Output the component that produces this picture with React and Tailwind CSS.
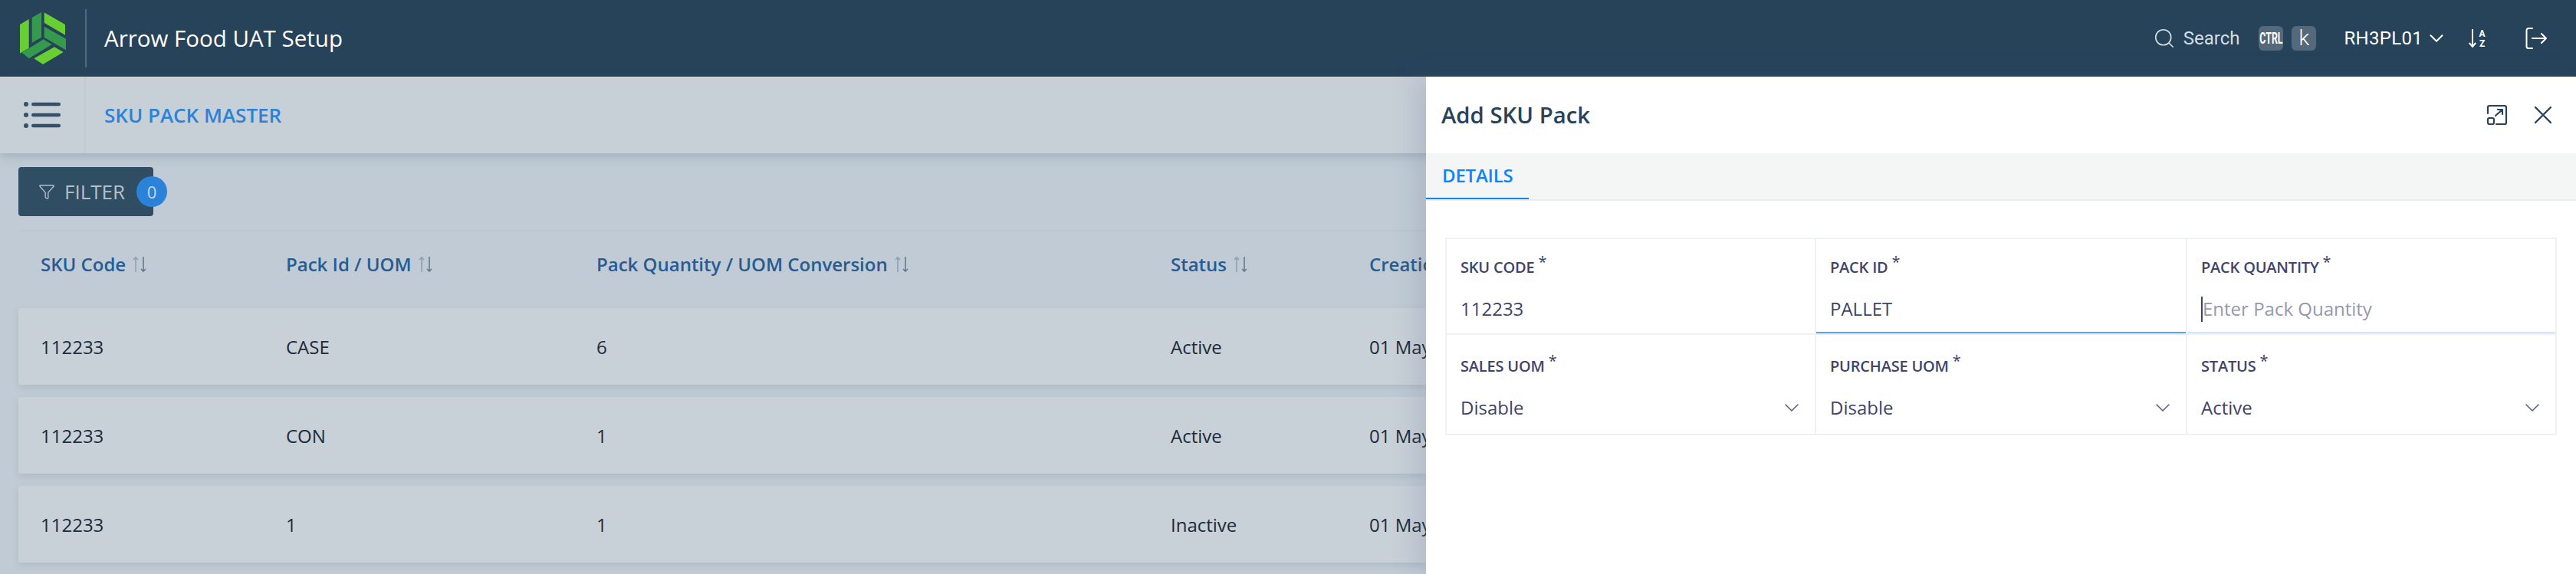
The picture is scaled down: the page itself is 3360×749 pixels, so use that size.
import React from 'react'
import { ChevronDown, Search, Filter } from 'lucide-react'

const font = { fontFamily: '"Open Sans", sans-serif' }
const roboto = { fontFamily: 'Roboto, sans-serif' }

const columns = [
  { label: 'SKU Code', cls: 'w-[320px]', sort: true },
  { label: 'Pack Id / UOM', cls: 'w-[405px]', sort: true },
  { label: 'Pack Quantity / UOM Conversion', cls: 'w-[749px]', sort: true },
  { label: 'Status', cls: 'w-[259px]', sort: true },
  { label: 'Creation Date', cls: 'w-[300px]', sort: false },
]

const rows = [
  ['112233', 'CASE', '6', 'Active', '01 May 2023'],
  ['112233', 'CON', '1', 'Active', '01 May 2023'],
  ['112233', '1', '1', 'Inactive', '01 May 2023'],
]

function Logo() {
  return (
    <svg viewBox="0 0 240 252" className="w-[80px] h-[84px]">
      <polygon points="30,72 65,51 65,164 30,185" fill="#68cf33" />
      <polygon points="77,45 114,24 114,122 77,143" fill="#359a4b" />
      <polygon points="125,25 207,72 207,113 125,65" fill="#68cf33" />
      <polygon points="125,80 210,128 210,172 125,122" fill="#359a4b" />
      <polygon points="122,130 155,150 65,205 38,182" fill="#359a4b" />
      <polygon points="165,160 200,180 120,228 85,205" fill="#68cf33" />
    </svg>
  )
}

function SortArrows() {
  return (
    <svg viewBox="0 0 20 22" className="w-[20px] h-[22px] ml-[8px]" fill="none" strokeWidth="1.600">
      <path d="M5 21V2M2 5l3-3 3 3" stroke="#8f9fb3" />
      <path d="M15 1v19M12 17l3 3 3-3" stroke="#66798f" />
    </svg>
  )
}

function Field({ label, value, placeholder, select, active, focus, low }) {
  return (
    <div className={`relative h-full px-[18px] ${low ? 'pt-[4px]' : ''}`}>
      <div className="flex items-start h-[74px] pt-[27px] text-[20px] leading-[20px] font-semibold text-[#3f4468] tracking-[-0.2px]">
        <span>{label}</span>
        <span className="ml-[5px] -mt-[7px] text-[20px] font-normal">*</span>
      </div>
      <div className="flex items-center justify-between h-[34px] text-[24px] leading-[34px] text-[#3f4468]">
        {placeholder ? (
          <span className="flex items-center text-[#9699ae]">
            <span className="w-[2px] h-[33px] bg-[#3f4468]" />
            {placeholder}
          </span>
        ) : (
          <span>{value}</span>
        )}
        {select && <ChevronDown size={32} strokeWidth={1.2} className="text-[#5a6080] -mr-[4px]" />}
      </div>
      {active && <div className="absolute left-0 right-0 bottom-0 h-[2px] bg-[#5ba0f8]" />}
      {focus && <div className="absolute left-0 right-0 bottom-0 h-[2px] bg-[#d4e6fd]" />}
    </div>
  )
}

export default function App() {
  return (
    <div style={font} className="relative w-[3360px] h-[749px] overflow-hidden bg-[#c0cbd5]">
      <header className="flex items-center h-[100px] bg-[#26435a] text-white">
        <div className="flex items-center justify-center w-[111px]">
          <Logo />
        </div>
        <div className="w-[2px] h-[76px] bg-[#4d6a85]" />
        <div className="ml-[23px] text-[29.5px] leading-[40px]">Arrow Food UAT Setup</div>
        <div style={roboto} className="flex items-center ml-auto pr-[38px]">
          <Search size={30} strokeWidth={1.3} className="text-[#d5dde3]" />
          <span className="ml-[10px] text-[24px] text-[#d5dde3]">Search</span>
          <span className="flex items-center justify-center ml-[25px] w-[32px] h-[32px] rounded-[6px] bg-[#54697b]">
            <span className="inline-block text-[20px] font-bold scale-x-[0.62]">CTRL</span>
          </span>
          <span className="flex items-center justify-center ml-[11px] w-[32px] h-[32px] rounded-[6px] bg-[#54697b] text-[28px] font-light">k</span>
          <span className="ml-[36px] text-[24px] tracking-[0.3px]">RH3PL01</span>
          <ChevronDown size={30} strokeWidth={1.6} className="ml-[3px]" />
          <svg viewBox="0 0 24 26" className="ml-[27px] w-[24px] h-[26px]" fill="none" stroke="#fff" strokeWidth="2">
            <path d="M5 1v23M0.800 19L5 24l4.200-5" />
            <text x="13.500" y="11" fontSize="12" fontWeight="700" fill="#fff" stroke="none">A</text>
            <text x="14" y="24" fontSize="12" fontWeight="700" fill="#fff" stroke="none">Z</text>
          </svg>
          <svg viewBox="0 0 28 28" className="ml-[50px] w-[28px] h-[28px]" fill="none" stroke="#fff" strokeWidth="2" strokeLinecap="round" strokeLinejoin="round">
            <path d="M9 1H4a2.500 2.500 0 0 0-2.500 2.500v21A2.500 2.500 0 0 0 4 27h5M9 14h18M21 8l6 6-6 6" />
          </svg>
        </div>
      </header>

      <div className="flex h-[100px] bg-[#c7cfd7] shadow-[0_4px_12px_rgba(70,90,110,0.25)]">
        <div className="flex items-center justify-center w-[112px] border-r-2 border-[#c0cad3]">
          <svg viewBox="0 0 48 34" className="w-[48px] h-[34px]" fill="#355068">
            <circle cx="3" cy="3" r="3" />
            <circle cx="3" cy="17" r="3" />
            <circle cx="3" cy="31" r="3" />
            <rect x="10" y="0.700" width="38" height="4.600" rx="2.300" />
            <rect x="10" y="14.700" width="38" height="4.600" rx="2.300" />
            <rect x="10" y="28.700" width="38" height="4.600" rx="2.300" />
          </svg>
        </div>
        <div className="flex items-center ml-[24px] text-[26px] font-semibold text-[#2a82d9]">SKU PACK MASTER</div>
      </div>

      <div className="pl-[24px] w-[1860px]">
        <div className="relative mt-[18px] flex items-center w-[176px] h-[64px] rounded-[4px] bg-[#2f4d63] pl-[26px] text-[#b5c0ca]">
          <Filter size={22} strokeWidth={1.5} />
          <span className="ml-[12px] text-[26px]">FILTER</span>
          <span className="absolute left-[154px] top-[12px] flex items-center justify-center w-[40px] h-[40px] rounded-full bg-[#2a82d9] text-[22px] text-[#c7d6e6]">0</span>
        </div>

        <div className="mt-[18px] border-t-2 border-[#bcc7d1]">
          <div className="flex h-[100px] items-center pl-[29px] pb-[14px] overflow-hidden">
            {columns.map((c) => (
              <div key={c.label} className={`flex items-center shrink-0 text-[24px] font-semibold text-[#255c94] ${c.cls}`}>
                {c.label}
                {c.sort && <SortArrows />}
              </div>
            ))}
          </div>
          <div className="flex flex-col gap-[16px]">
            {rows.map((r, i) => (
              <div key={i} className="flex items-center h-[100px] pl-[29px] pt-[2px] rounded-l-[3px] bg-[#c8d0d8] shadow-[0_4px_10px_rgba(100,115,135,0.18)] text-[24px] text-[#1e2a38]">
                <div className="flex w-full overflow-hidden">
                  {r.map((v, j) => (
                    <div key={j} className={`shrink-0 ${columns[j].cls}`}>{v}</div>
                  ))}
                </div>
              </div>
            ))}
          </div>
        </div>
      </div>

      {/* side panel sits over the list */}
      <div className="absolute left-[1860px] right-0 top-[100px] bottom-0 bg-white shadow-[-14px_0_30px_rgba(90,105,125,0.18)]">
        <div className="flex items-center h-[100px] pl-[20px] pr-[31px]">
          <div className="pt-[2px] text-[29.3px] font-semibold text-[#26435a]">Add SKU Pack</div>
          <svg viewBox="0 0 28 28" className="ml-auto w-[28px] h-[28px]" fill="none" stroke="#26435a" strokeWidth="2.200" strokeLinecap="round" strokeLinejoin="round">
            <path d="M2 12V4a2 2 0 0 1 2-2h20a2 2 0 0 1 2 2v20a2 2 0 0 1-2 2H13M12 15l9-8M15 7h6v6" />
            <rect x="2" y="18" width="8" height="8" rx="2" />
          </svg>
          <svg viewBox="0 0 24 24" className="ml-[34px] w-[24px] h-[24px]" fill="none" stroke="#26435a" strokeWidth="2.400" strokeLinecap="round">
            <path d="M2 2l20 20M22 2L2 22" />
          </svg>
        </div>
        <div className="h-[62px] bg-[#f4f5f5] border-b-2 border-[#e8edf0]">
          <div className="flex items-center h-[60px] w-[134px] pl-[21px] border-b-2 border-[#0a84ff] text-[24px] font-semibold text-[#0a84ff] tracking-[-0.2px]">DETAILS</div>
        </div>
        <div className="mx-[25px] mt-[48px] grid grid-cols-[482px_484px_1fr] grid-rows-[125px_129px] border-2 border-[#eef2f6]">
          <div className="border-r-2 border-b-2 border-[#eef2f6]"><Field label="SKU CODE" value="112233" /></div>
          <div className="border-r-2 border-b-2 border-[#eef2f6]"><Field label="PACK ID" value="PALLET" active /></div>
          <div className="border-b-2 border-[#eef2f6]"><Field label="PACK QUANTITY" placeholder="Enter Pack Quantity" focus /></div>
          <div className="border-r-2 border-[#eef2f6]"><Field label="SALES UOM" value="Disable" select low /></div>
          <div className="border-r-2 border-[#eef2f6]"><Field label="PURCHASE UOM" value="Disable" select low /></div>
          <div><Field label="STATUS" value="Active" select low /></div>
        </div>
      </div>
    </div>
  )
}
